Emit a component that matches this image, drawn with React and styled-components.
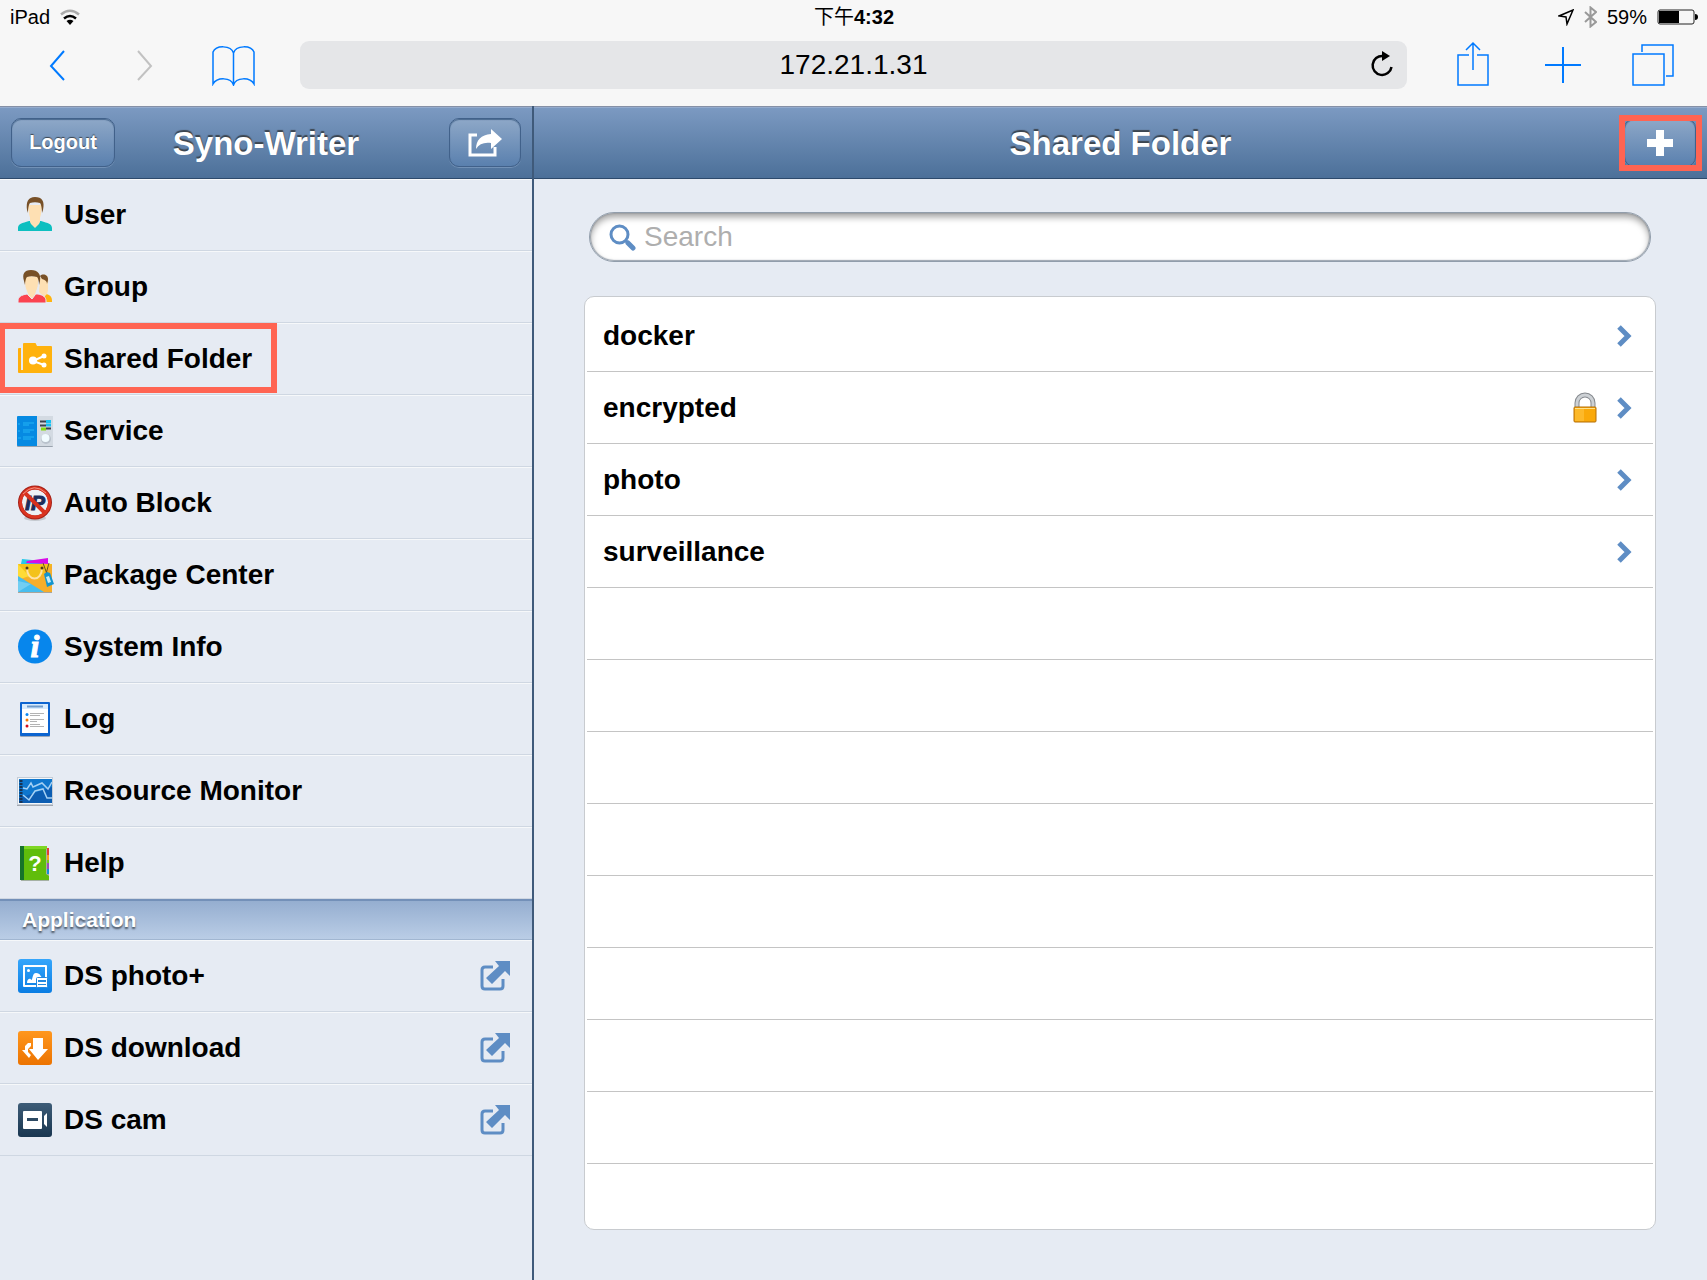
import styled, { createGlobalStyle } from 'styled-components'

const GlobalStyle = createGlobalStyle`
* { box-sizing: border-box; }
body {
margin: 0;
background-color: #e6ebf3;
color: #000;
font-family: "Liberation Sans", Arial, "Noto Sans CJK TC", sans-serif;
}
button, input { font-family: inherit; }
svg { display: block; flex: none; }
`;
const Page = styled.div`
min-height: 100vh;
display: flex;
flex-direction: column;
`;

/* browser bars */
const Chrome = styled.div`
background-color: #f7f7f7;
`;
const StatusBar = styled.div`
display: grid;
grid-template-columns: 1fr auto 1fr;
align-items: center;
height: 34px;
padding: 0 9px 0 10px;
font-size: 20px;
line-height: 34px;
`;
const StatusGroup = styled.div`
display: flex;
align-items: center;
justify-content: ${(props) => (props.$end ? "flex-end" : "flex-start")};
gap: 10px;
`;
const Time = styled.div`
font-weight: bold;
`;
const DayPart = styled.span`
font-weight: normal;
`;
const Toolbar = styled.div`
display: flex;
align-items: center;
padding: 7px 0 17px;
`;
const ToolGroup = styled.div`
display: flex;
flex: none;
width: 300px;
padding-left: ${(props) => props.$inset};
`;
const ToolButton = styled.button`
display: flex;
align-items: center;
justify-content: center;
width: ${(props) => props.$width || "88px"};
height: 48px;
padding: 0;
border: 0;
background: none;
color: #007aff;
&:disabled { color: #c2c2c2; }
`;
const AddressBar = styled.div`
flex: 1;
min-width: 0;
display: flex;
height: 48px;
border-radius: 9px;
background-color: #e5e6e8;
`;
const Address = styled.input`
flex: 1;
min-width: 0;
padding: 0 0 0 48px;
border: 0;
background: none;
color: #000;
font-size: 28px;
text-align: center;
outline: none;
`;
const Reload = styled(ToolButton)`
color: #000;
`;

/* page */
const Body = styled.div`
flex: 1;
display: flex;
`;
const Sidebar = styled.aside`
flex: none;
width: 534px;
border-right: 2px solid #3f5a7a;
`;
const Main = styled.main`
flex: 1;
min-width: 0;
`;
const Header = styled.header`
display: grid;
grid-template-columns: 1fr auto 1fr;
align-items: center;
height: 73px;
padding: 0 11px;
border-top: 1px solid #8590a6;
border-bottom: 1px solid #2d4a6c;
background: linear-gradient(#7c9ac2, #4c7099);
box-shadow: inset 0 1px #94abcd;
`;
const Title = styled.h1`
grid-column: 2;
margin: 0;
padding-top: 2px;
color: #fff;
font-size: 33px;
font-weight: bold;
line-height: 40px;
text-shadow: 0 -2px 1px #3c454f;
`;
const HeaderButton = styled.button`
display: flex;
align-items: center;
justify-content: center;
justify-self: start;
width: ${(props) => props.$width || "72px"};
height: 49px;
padding: 0;
border: 1px solid #41618a;
border-radius: 10px;
background: linear-gradient(#8ea8c8, #5a80ae);
box-shadow: inset 0 1px 1px #49698e, 0 1px #7291b6;
color: #fff;
font-size: 20px;
font-weight: bold;
text-shadow: 0 -1px 1px #3c454f;
`;
const HeaderAction = styled.div`
grid-column: 3;
justify-self: end;
position: relative;
`;
const ButtonMark = styled.span`
position: absolute;
inset: -3px -6px -4px -5px;
border: 6px solid #ff6452;
pointer-events: none;
`;
const Menu = styled.ul`
margin: 0;
padding: 0;
list-style: none;
`;
const MenuItem = styled.li`
position: relative;
border-bottom: 1px solid #cfd7e2;
box-shadow: inset 0 1px #f6f8fa;
`;
const MenuLink = styled.a`
display: flex;
align-items: center;
gap: 10px;
height: 71px;
padding: 0 22px 0 16px;
color: #000;
font-size: 28px;
font-weight: bold;
text-decoration: none;
`;
const MenuText = styled.span`
flex: 1;
`;
const ItemMark = styled.span`
position: absolute;
inset: 0 auto 1px 0;
width: 277px;
border: 6px solid #ff6452;
border-left-width: 5px;
pointer-events: none;
`;
const Section = styled.h2`
margin: 0;
padding: 0 22px;
height: 41px;
border-top: 2px solid #7390b8;
border-bottom: 1px solid #a1b6d1;
background: linear-gradient(#95aed0, #bacde6);
color: #fff;
font-size: 21px;
line-height: 38px;
text-shadow: 0 2px 2px #47525f;
`;
const Search = styled.label`
display: flex;
align-items: center;
gap: 8px;
height: 50px;
margin: 33px 56px 34px 55px;
padding: 0 20px 0 19px;
border: 1px solid #919dab;
border-radius: 25px;
background-color: #fff;
box-shadow: inset 0 4px 7px #a0a0a0, inset 0 0 1px 1px #9ca6b2;
`;
const SearchInput = styled.input`
flex: 1;
min-width: 0;
padding: 0;
border: 0;
background: none;
font-size: 28px;
outline: none;
&::placeholder { color: #aeaeae; }
`;
const FolderList = styled.ul`
margin: 0 51px 50px 50px;
padding: 3px 2px 0;
border: 1px solid #c8cbcf;
border-radius: 10px;
background-color: #fff;
list-style: none;
`;
const FolderRow = styled.li`
height: 72px;
border-bottom: 1px solid #c4c4c4;
&:last-child {
height: 65px;
border-bottom: 0;
}
`;
const FolderLink = styled.a`
display: flex;
align-items: center;
gap: 20px;
height: 71px;
padding: 0 21px 0 16px;
color: #000;
font-size: 28px;
font-weight: bold;
text-decoration: none;
`;

const Icon = ({ children, w = 38, h = 38, ...rest }) => (
    <svg width={w} height={h} viewBox={`0 0 ${w} ${h}`} fill="none" aria-hidden="true" {...rest}>{children}</svg>
);

const UserIcon = () => (
    <Icon>
        <path d="M2 35v-3c0-4 4-5 11-7h12c7 2 11 3 11 7v3z" fill="#0dbfc0" />
        <path d="M14 20h10v6l-1 2-4 4-4-4-1-2z" fill="#fee0b3" />
        <path d="M12 9h14l-1 9c-1 5-3 8-6 8s-5-3-6-8z" fill="#fee0b3" />
        <path d="M11 14c-1-8 1-13 8-13s10 4 8 13l-1 3c0-5-1-9-2-10-3-1-7-1-10 0-1 1-2 5-2 10z" fill="#775027" />
    </Icon>
);
const GroupIcon = () => (
    <Icon>
        <path d="M29 34v-8c4 0 7 2 7 7v1z" fill="#ffb30f" />
        <path d="M24 13c0-5 3-7 6-6 2 1 3 5 2 8v6c0 3-1 4-1 5l-3 3-5-5z" fill="#fee0b3" />
        <path d="M24 8c3-3 8-1 8 3 0 3-1 4-1 5 0-3-2-4-5-5z" fill="#775027" />
        <path d="M2 35v-2c0-4 3-6 9-7h11c5 1 8 3 8 7v2z" fill="#fb4350" stroke="#e6ebf3" />
        <path d="M8 8h15l-1 11-3 8-3 4-4-4-3-8z" fill="#fee0b3" stroke="#e6ebf3" />
        <path d="M10 10h12l-1 9-2 7-3 4-3-4-3-7z" fill="#fee0b3" />
        <path d="M8 13C6 6 8 2 15 2s10 4 9 11l-1 4c0-4-1-7-2-8-4-1-7-1-10 0-1 1-2 4-2 8z" fill="#775027" />
    </Icon>
);
const FolderIcon = () => (
    <Icon>
        <path d="M3 8h2v22h1v3H3q-1 0-1-1V9q0-1 1-1z" fill="#ffae0a" />
        <path d="M7 4q0-1 1-1h11q1 0 1 1l1 2h14q1 0 1 1v25q0 1-1 1H5v-3h2z" fill="#ffb20d" />
        <path d="M28 16l-11 5 11 4" stroke="#fff" strokeWidth="2" />
        <circle cx="17" cy="20.500" r="4" fill="#fff" />
        <circle cx="28" cy="16" r="2.500" fill="#fff" />
        <circle cx="28" cy="25" r="2.500" fill="#fff" />
    </Icon>
);
const ServiceIcon = () => (
    <Icon>
        <rect x="1" y="5" width="36" height="30" rx="1" fill="#9aa3ae" />
        <rect x="1" y="4" width="21" height="30" rx="1" fill="#068ae2" />
        <rect x="21" y="4" width="16" height="30" fill="#d3dae2" />
        <path d="M2 12h2m3-1h11m-11 2h6M2 19h2m3-1h11m-11 2h7M2 26h3m2-1h11m-11 2h8" stroke="#23b4f5" />
        <path d="M24 9.500h6m-6 4h6m0 3h5" stroke="#3a434d" strokeWidth="2" />
        <path d="M30 9.500h5M30 13h5" stroke="#17c2f3" strokeWidth="3" />
        <path d="M25 17h5" stroke="#85dc10" strokeWidth="3" />
        <circle cx="30" cy="27" r="5" fill="#b9c2cc" />
        <circle cx="29.500" cy="26" r="4" fill="#f1fbff" />
    </Icon>
);
const BlockIcon = () => (
    <Icon>
        <ellipse cx="19" cy="34" rx="11" ry="3" fill="#c3c8ce" />
        <circle cx="19" cy="18.500" r="15" fill="#edf1f5" stroke="#a52016" strokeWidth="4" />
        <text x="19" y="26" textAnchor="middle" fontSize="21" fontWeight="bold" fontStyle="italic" fill="#1c2e5b" stroke="#1c2e5b">IP</text>
        <circle cx="19" cy="18.500" r="14.500" stroke="#dc3521" strokeWidth="3" />
        <path d="M8 8l21 21" stroke="#d8321e" strokeWidth="4" />
        <path d="M7 10Q18-2 30 9" stroke="#f39382" />
    </Icon>
);
const PackageIcon = () => (
    <Icon>
        <path d="M5 8l1-5 20 2v4z" fill="#27c8e8" />
        <path d="M10 7l1-2 21-3v6z" fill="#d80be8" />
        <path d="M2 8h34v28H2z" fill="#f6ae2b" />
        <path d="M2 8h34L22 24 2 19z" fill="#f3c21a" />
        <path d="M2 8l11 12-11 4z" fill="#ffdb36" />
        <path d="M2 20l26 16H2z" fill="#47bdee" />
        <path d="M2 25l13 3-13 8z" fill="#72cef2" />
        <path d="M2 36.500h34" stroke="#a9a49a" />
        <path d="M11 12c0 14 15 14 15 0" stroke="#ffe2a4" strokeWidth="2" />
        <circle cx="11" cy="12" r="1.500" fill="#4d3c16" />
        <circle cx="26" cy="12" r="1.500" fill="#4d3c16" />
        <path d="M27 7l4 11m2-11l-3 11" stroke="#655023" />
        <path d="M28 18l3-2 3 1 4 11-7 3z" fill="#1395cf" />
        <path d="M30 21l3-1 2 6-3 1z" fill="#c6ebf8" />
    </Icon>
);
const InfoIcon = () => (
    <Icon>
        <circle cx="19" cy="18.500" r="17" fill="#0786ec" />
        <text x="19" y="29" textAnchor="middle" fontFamily="Liberation Serif, serif" fontSize="32" fontWeight="bold" fontStyle="italic" fill="#fff" stroke="#fff">i</text>
    </Icon>
);
const LogIcon = () => (
    <Icon>
        <rect x="4" y="4" width="30" height="33" rx="1" fill="#9ba7b8" />
        <rect x="4" y="2" width="30" height="34" rx="1" fill="#0c64d0" />
        <path d="M6 4h26v29H6z" fill="#fff" />
        <path d="M6 4h26v5H6z" fill="#d7ebfd" />
        <path d="M11 6.500h16" stroke="#6f9bca" strokeWidth="2" />
        <path d="M14 13.500h14m-14 2h10m-10 4h14m-14 2h7m-7 3h10m-10 2h14" stroke="#b3b3b3" />
        <circle cx="11" cy="14.500" r="1.500" fill="#0b88f4" />
        <circle cx="11" cy="20" r="1.500" fill="#fb7900" />
        <circle cx="11" cy="26" r="1.500" fill="#d40b19" />
    </Icon>
);
const MonitorIcon = () => (
    <Icon>
        <path d="M1 32h36v2H1z" fill="#a3a8b0" />
        <path d="M1 5h36v28H1z" fill="#c4ccd6" />
        <path d="M2 6h34v26H2z" fill="#f4f7fa" />
        <path d="M3 7h33v24H3z" fill="#0c5db2" />
        <path d="M3 7h33v8L3 26z" fill="#0e76cd" />
        <path d="M5 8v23" stroke="#173355" strokeWidth="3" strokeDasharray="2 1" />
        <path d="M7 16l4 1 4-6 2 4 9-4 6 6 4-7M7 23l6 5 6-9 8-2 4 9h5" stroke="#a5d1f4" strokeWidth="1.500" />
    </Icon>
);
const HelpIcon = () => (
    <Icon>
        <path d="M5 4h28v33H5z" fill="#a5b1a4" />
        <path d="M31 4h2v7h-2z" fill="#e43c36" />
        <path d="M31 11h2v5h-2z" fill="#f6a11a" />
        <path d="M31 16h2v3h-2z" fill="#79c91d" />
        <path d="M31 19h2v6h-2z" fill="#9b4eb4" />
        <path d="M31 25h2v5h-2z" fill="#178fdb" />
        <path d="M4 2h27l-1 2v26l3 2v4H4z" fill="#60bd0b" />
        <path d="M8 2h23v3H8z" fill="#7ed623" />
        <path d="M4 2h4v34H4z" fill="#16742a" />
        <text x="19" y="27" textAnchor="middle" fontSize="22" fontWeight="bold" fill="#fff">?</text>
    </Icon>
);
const Tile = ({ id, top, bottom, children }) => (
    <Icon>
        <linearGradient id={id} x2="0" y2="1">
            <stop stopColor={top} />
            <stop offset="1" stopColor={bottom} />
        </linearGradient>
        <rect x="2" y="2" width="34" height="34" rx="3" fill={`url(#${id})`} />
        {children}
    </Icon>
);
const PhotoIcon = () => (
    <Tile id="photo" top="#36a6fb" bottom="#0a7de3">
        <path d="M20 29H8V9h22v12" stroke="#fff" strokeWidth="2" strokeLinejoin="round" />
        <path d="M11 26c0-5 4-5 4-3 2 0 1-7 5-7 5 0 4 4 7 5v5z" fill="#fff" />
        <circle cx="12.500" cy="13.500" r="1.500" fill="#fff" />
        <rect x="20.500" y="20.500" width="11" height="10" rx="1" fill="#fff" stroke="#2589df" />
        <path d="M22 23h8v2h-8zm0 4h8v1h-8z" fill="#2589df" />
    </Tile>
);
const DownloadIcon = () => (
    <Tile id="download" top="#ff971e" bottom="#ec7300">
        <path d="M17 9h10v11h5L22 31l-9-11h4z" fill="#fff" />
        <path d="M15 14v3l-3 3v3l3 3-2 3-7-8h3v-4l3-3z" fill="#fff" />
    </Tile>
);
const CamIcon = () => (
    <Tile id="cam" top="#3d5c77" bottom="#193650">
        <rect x="7" y="10" width="19" height="18" rx="1" fill="#fff" />
        <path d="M11 17h11v3H11z" fill="#2c4963" />
        <path d="M28 15l3-3v14l-3-3z" fill="#fff" />
    </Tile>
);
const ExternalIcon = () => (
    <Icon w={30} h={30}>
        <path d="M13 6H5Q2 6 2 9v16q0 3 3 3h15q3 0 3-3v-7" stroke="#5e8dc4" strokeWidth="3" />
        <path d="M15 0h15v15l-5-5-13 13-6-6L19 5z" fill="#5e8dc4" />
    </Icon>
);
const LockIcon = () => (
    <Icon w={24} h={31}>
        <path d="M4 15v-4a8 8 0 0 1 16 0v4" stroke="#85898e" strokeWidth="5" />
        <path d="M4 15v-4a8 8 0 0 1 16 0v4" stroke="#cdd1d5" strokeWidth="3" />
        <rect x="1" y="15" width="22" height="15" rx="1" fill="#faa90a" stroke="#b56f06" />
        <path d="M2 16h9v13H2z" fill="#fdb92a" />
        <path d="M2 16.500h20" stroke="#ffe38c" />
    </Icon>
);
const Chevron = () => (
    <Icon w={15} h={22}>
        <path d="M2 2l9 9-9 9" stroke="#5e8dc4" strokeWidth="5" />
    </Icon>
);

const menu = [
    { name: "User", icon: UserIcon },
    { name: "Group", icon: GroupIcon },
    { name: "Shared Folder", icon: FolderIcon, marked: true },
    { name: "Service", icon: ServiceIcon },
    { name: "Auto Block", icon: BlockIcon },
    { name: "Package Center", icon: PackageIcon },
    { name: "System Info", icon: InfoIcon },
    { name: "Log", icon: LogIcon },
    { name: "Resource Monitor", icon: MonitorIcon },
    { name: "Help", icon: HelpIcon },
];
const apps = [
    { name: "DS photo+", icon: PhotoIcon },
    { name: "DS download", icon: DownloadIcon },
    { name: "DS cam", icon: CamIcon },
];
const folders = [
    { name: "docker" },
    { name: "encrypted", locked: true },
    { name: "photo" },
    { name: "surveillance" },
];
const emptyRows = 9;

const MenuList = ({ items, external }) => (
    <Menu>
        {items.map(({ name, icon: ItemIcon, marked }) => (
            <MenuItem key={name}>
                <MenuLink href="#">
                    <ItemIcon />
                    <MenuText>{name}</MenuText>
                    {external && <ExternalIcon />}
                </MenuLink>
                {marked && <ItemMark />}
            </MenuItem>
        ))}
    </Menu>
);

const BrowserBar = () => (
    <Chrome>
        <StatusBar>
            <StatusGroup>
                iPad
                <Icon w={20} h={17}>
                    <path d="M1 5.500Q10-2 19 5.500" stroke="#aaa" strokeWidth="2.500" />
                    <path d="M4 9.500q6-5 12 0" stroke="#000" strokeWidth="2.500" />
                    <path d="M6.500 12q3.500-2.500 7 0L10 16z" fill="#000" />
                </Icon>
            </StatusGroup>
            <Time><DayPart>下午</DayPart>4:32</Time>
            <StatusGroup $end>
                <Icon w={16} h={17}>
                    <path d="M15 1L9 15 8 8 1 7z" stroke="#000" strokeWidth="1.500" />
                </Icon>
                <Icon w={13} h={22}>
                    <path d="M1 6l11 10-5.500 4.500V1.500L12 6 1 16" stroke="#999" strokeWidth="2" />
                </Icon>
                <span>59%</span>
                <Icon w={41} h={16}>
                    <rect x="1" y="1" width="36" height="14" rx="2" stroke="#222" />
                    <path d="M2 2h20v12H2z" fill="#000" />
                    <path d="M38 5q3 0 3 3t-3 3z" fill="#000" />
                </Icon>
            </StatusGroup>
        </StatusBar>
        <Toolbar>
            <ToolGroup $inset="13px">
                <ToolButton aria-label="Back">
                    <Icon w={16} h={32}><path d="M15 2L2 17l13 14" stroke="currentColor" strokeWidth="2" /></Icon>
                </ToolButton>
                <ToolButton aria-label="Forward" disabled>
                    <Icon w={16} h={32}><path d="M1 2l13 15L1 31" stroke="currentColor" strokeWidth="2" /></Icon>
                </ToolButton>
                <ToolButton aria-label="Bookmarks">
                    <Icon w={43} h={42}>
                        <path d="M21.500 41V9C19 1 4 1 1 8v32c4-7 18-7 20.500 1C24 33 38 33 42 40V8C39 1 24 1 21.500 9" stroke="currentColor" strokeWidth="1.500" />
                    </Icon>
                </ToolButton>
            </ToolGroup>
            <AddressBar>
                <Address aria-label="Address" defaultValue="172.21.1.31" />
                <Reload $width="48px" aria-label="Reload">
                    <Icon w={26} h={28}>
                        <path d="M13 5A9.500 9.500 0 1 0 21.500 16" stroke="currentColor" strokeWidth="2.500" />
                        <path d="M12 0l8 5-8 5z" fill="currentColor" />
                    </Icon>
                </Reload>
            </AddressBar>
            <ToolGroup $inset="21px">
                <ToolButton $width="90px" aria-label="Share">
                    <Icon w={32} h={48}>
                        <path d="M12 14H1v30h30V14H20M16 29V2M9 9l7-7 7 7" stroke="currentColor" strokeWidth="1.500" />
                    </Icon>
                </ToolButton>
                <ToolButton $width="90px" aria-label="New tab">
                    <Icon w={36} h={36}><path d="M18 0v36M0 18h36" stroke="currentColor" strokeWidth="2" /></Icon>
                </ToolButton>
                <ToolButton $width="90px" aria-label="Tabs">
                    <Icon w={42} h={42}>
                        <path d="M1 10h31v31H1zM10 8V1h31v31h-7" stroke="currentColor" strokeWidth="1.500" />
                    </Icon>
                </ToolButton>
            </ToolGroup>
        </Toolbar>
    </Chrome>
);

const App = () => {
    return (
        <Page>
            <GlobalStyle />
            <BrowserBar />
            <Body>
                <Sidebar>
                    <Header>
                        <HeaderButton $width="104px">Logout</HeaderButton>
                        <Title as="div">Syno-Writer</Title>
                        <HeaderAction>
                            <HeaderButton aria-label="Desktop site">
                                <Icon w={36} h={28}>
                                    <path d="M10 6H3v20h25v-8" stroke="#fff" strokeWidth="3" />
                                    <path d="M24 0l11 10-11 10v-6c-7-1-12 1-15 6C9 11 14 6 24 5z" fill="#fff" />
                                </Icon>
                            </HeaderButton>
                        </HeaderAction>
                    </Header>
                    <MenuList items={menu} />
                    <Section>Application</Section>
                    <MenuList items={apps} external />
                </Sidebar>
                <Main>
                    <Header>
                        <Title>Shared Folder</Title>
                        <HeaderAction>
                            <HeaderButton aria-label="Add folder">
                                <Icon w={26} h={26}><path d="M9 0h8v9h9v8h-9v9H9v-9H0V9h9z" fill="#fff" /></Icon>
                            </HeaderButton>
                            <ButtonMark />
                        </HeaderAction>
                    </Header>
                    <Search>
                        <Icon w={27} h={27}>
                            <circle cx="10.500" cy="10.500" r="8.500" stroke="#5e8dc4" strokeWidth="3" />
                            <path d="M16 16l3 3" stroke="#5e8dc4" strokeWidth="3" />
                            <path d="M19 19l5 5" stroke="#5e8dc4" strokeWidth="5" strokeLinecap="round" />
                        </Icon>
                        <SearchInput type="search" placeholder="Search" aria-label="Search" />
                    </Search>
                    <FolderList>
                        {folders.map((folder) => (
                            <FolderRow key={folder.name}>
                                <FolderLink href="#">
                                    <MenuText>{folder.name}</MenuText>
                                    {folder.locked && <LockIcon />}
                                    <Chevron />
                                </FolderLink>
                            </FolderRow>
                        ))}
                        {Array.from({ length: emptyRows }, (_, i) => (
                            <FolderRow key={i} />
                        ))}
                    </FolderList>
                </Main>
            </Body>
        </Page>
    )
}

export default App
